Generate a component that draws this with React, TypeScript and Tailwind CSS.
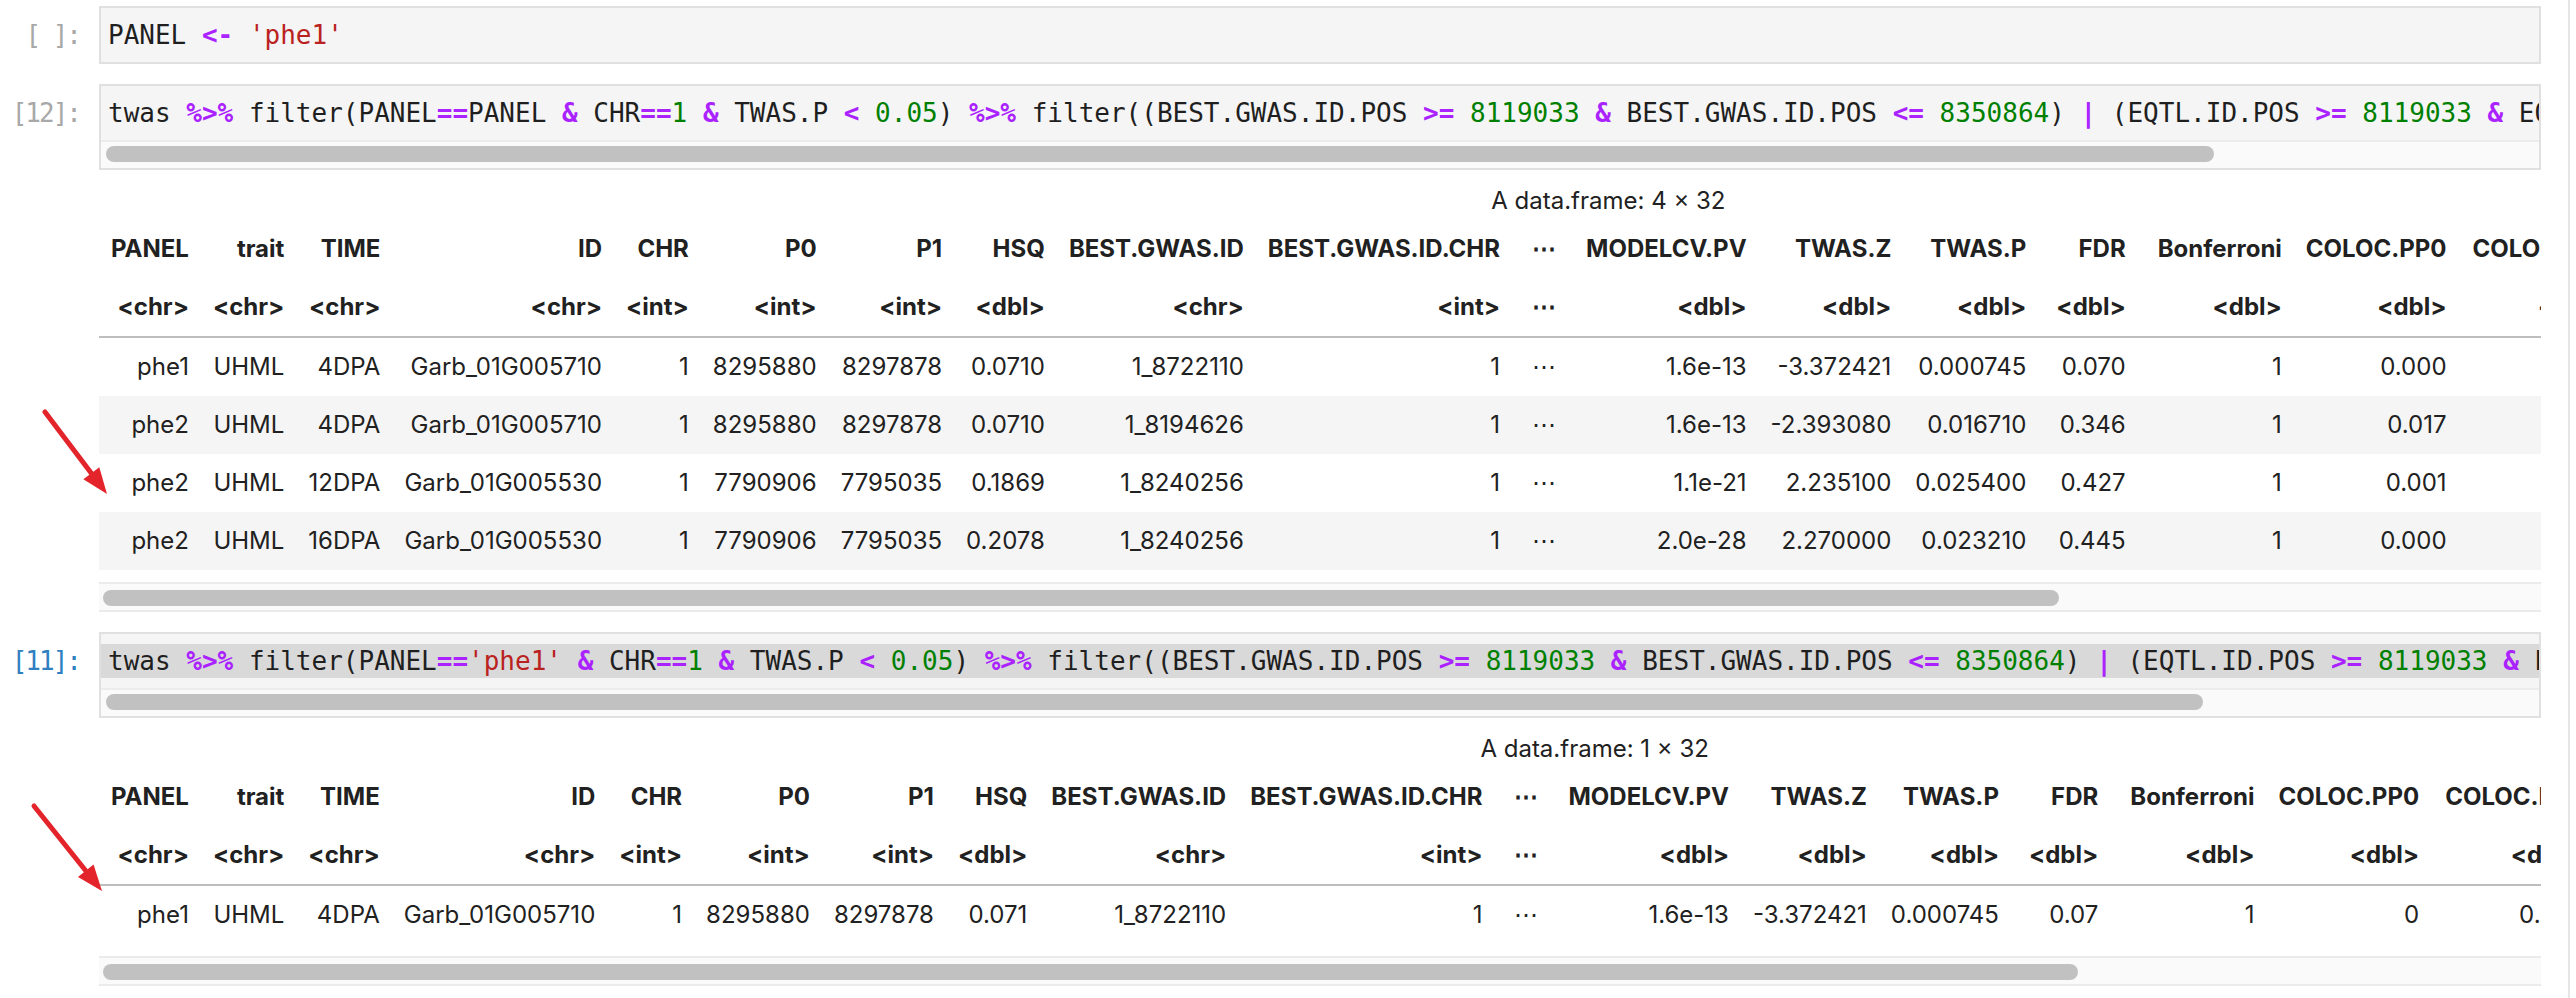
import React from "react";

type Tok = [string, string];

const line1: Tok[] = [["PANEL ", ""], ["<-", "o"], [" ", ""], ["'phe1'", "s"]];

const tail: Tok[] = [
  [" ", ""], ["&", "o"], [" CHR", ""], ["==", "o"], ["1", "n"], [" ", ""], ["&", "o"],
  [" TWAS.P ", ""], ["<", "o"], [" ", ""], ["0.05", "n"], [") ", ""], ["%>%", "o"],
  [" filter((BEST.GWAS.ID.POS ", ""], [">=", "o"], [" ", ""], ["8119033", "n"], [" ", ""],
  ["&", "o"], [" BEST.GWAS.ID.POS ", ""], ["<=", "o"], [" ", ""], ["8350864", "n"], [") ", ""],
  ["|", "o"], [" (EQTL.ID.POS ", ""], [">=", "o"], [" ", ""], ["8119033", "n"], [" ", ""],
  ["&", "o"], [" EQTL.ID.POS ", ""], ["<=", "o"], [" ", ""], ["8350864", "n"], ["))", ""],
];

const line12: Tok[] = [
  ["twas ", ""], ["%>%", "o"], [" filter(PANEL", ""], ["==", "o"], ["PANEL", ""], ...tail,
];
const line11: Tok[] = [
  ["twas ", ""], ["%>%", "o"], [" filter(PANEL", ""], ["==", "o"], ["'phe1'", "s"], ...tail,
];

function Code({ toks }: { toks: Tok[] }) {
  return (
    <>
      {toks.map((t, i) =>
        t[1] === "o" ? (
          <span key={i} className="text-[#aa22ff] font-bold">{t[0]}</span>
        ) : t[1] === "n" ? (
          <span key={i} className="text-[#008000]">{t[0]}</span>
        ) : t[1] === "s" ? (
          <span key={i} className="text-[#ba2121]">{t[0]}</span>
        ) : (
          <span key={i}>{t[0]}</span>
        )
      )}
    </>
  );
}

function Prompt({ label, active }: { label: string; active?: boolean }) {
  return (
    <div
      className={
        "w-[99px] shrink-0 pr-[19px] pt-[12px] text-right text-[26px] leading-[34px] tracking-[-2px] font-['DejaVu_Sans_Mono',monospace] " +
        (active ? "text-[#307fc1]" : "text-[#a8a8a8]")
      }
    >
      {label}
    </div>
  );
}

function CodeCell({
  label,
  toks,
  active,
  scroll,
  selected,
}: {
  label: string;
  toks: Tok[];
  active?: boolean;
  scroll?: string;
  selected?: boolean;
}) {
  return (
    <div className="flex">
      <Prompt label={label} active={active} />
      <div className="flex-1 min-w-0 border-2 border-[#e0e0e0] bg-[#f5f5f5]">
        <div className="h-[54px] py-[10px] overflow-hidden">
          <div
            className={
              "h-[34px] pl-[7px] whitespace-pre text-[26px] leading-[34px] text-[#1f1f1f] font-['DejaVu_Sans_Mono',monospace] " +
              (selected ? "bg-[#d9d9d9]" : "")
            }
          >
            <Code toks={toks} />
          </div>
        </div>
        {scroll ? (
          <div className="h-[28px] border-t-2 border-[#ececec] bg-[#fafafa] pt-[4px] pl-[5px]">
            <div className={"h-[16px] rounded-full bg-[#c1c1c1] " + scroll} />
          </div>
        ) : null}
      </div>
    </div>
  );
}

const headers = [
  "PANEL", "trait", "TIME", "ID", "CHR", "P0", "P1", "HSQ", "BEST.GWAS.ID", "BEST.GWAS.ID.CHR", "⋯",
  "MODELCV.PV", "TWAS.Z", "TWAS.P", "FDR", "Bonferroni", "COLOC.PP0", "COLOC.PP1", "COLOC.PP2", "COLOC.PP3", "COLOC.PP4",
];
const types = [
  "<chr>", "<chr>", "<chr>", "<chr>", "<int>", "<int>", "<int>", "<dbl>", "<chr>", "<int>", "⋯",
  "<dbl>", "<dbl>", "<dbl>", "<dbl>", "<dbl>", "<dbl>", "<dbl>", "<dbl>", "<dbl>", "<dbl>",
];

// left padding per column (tuned to the reference column positions)
const padL = [
  "pl-[12px]", "pl-[12px]", "pl-[12px]", "pl-[12px]", "pl-[12px]", "pl-[12px]", "pl-[12px]", "pl-[12px]",
  "pl-[12px]", "pl-[12px]", "pl-[20px]", "pl-[18px]", "pl-[12px]", "pl-[12px]", "pl-[18px]", "pl-[20px]",
  "pl-[12px]", "pl-[14px]", "pl-[14px]", "pl-[14px]", "pl-[14px]",
];

const rows1: string[][] = [
  ["phe1", "UHML", "4DPA", "Garb_01G005710", "1", "8295880", "8297878", "0.0710", "1_8722110", "1", "⋯", "1.6e-13", "-3.372421", "0.000745", "0.070", "1", "0.000", "0.001", "0.812", "0.002", "0.185"],
  ["phe2", "UHML", "4DPA", "Garb_01G005710", "1", "8295880", "8297878", "0.0710", "1_8194626", "1", "⋯", "1.6e-13", "-2.393080", "0.016710", "0.346", "1", "0.017", "0.004", "0.881", "0.006", "0.092"],
  ["phe2", "UHML", "12DPA", "Garb_01G005530", "1", "7790906", "7795035", "0.1869", "1_8240256", "1", "⋯", "1.1e-21", "2.235100", "0.025400", "0.427", "1", "0.001", "0.000", "0.915", "0.001", "0.083"],
  ["phe2", "UHML", "16DPA", "Garb_01G005530", "1", "7790906", "7795035", "0.2078", "1_8240256", "1", "⋯", "2.0e-28", "2.270000", "0.023210", "0.445", "1", "0.000", "0.000", "0.934", "0.000", "0.066"],
];
const rows2: string[][] = [
  ["phe1", "UHML", "4DPA", "Garb_01G005710", "1", "8295880", "8297878", "0.071", "1_8722110", "1", "⋯", "1.6e-13", "-3.372421", "0.000745", "0.07", "1", "0", "0.001", "0.812", "0.002", "0.185"],
];

function DataFrame({ caption, rows }: { caption: string; rows: string[][] }) {
  return (
    <div className="ml-[99px] w-[2442px] overflow-hidden mt-[16px]">
      <table className="border-separate border-spacing-0 text-[24px] text-[#212121] font-['Inter',sans-serif]">
        <caption className="pb-[5px] leading-[29px] text-center font-normal">{caption}</caption>
        <thead>
          <tr>
            {headers.map((h, i) => (
              <th key={i} className={"h-[58px] pr-[12px] py-0 text-right align-middle font-bold whitespace-nowrap " + padL[i]}>
                {h}
              </th>
            ))}
          </tr>
          <tr>
            {types.map((h, i) => (
              <th
                key={i}
                className={
                  "h-[60px] pr-[12px] py-0 text-right align-middle font-bold whitespace-nowrap border-b-2 border-[#bdbdbd] " +
                  padL[i]
                }
              >
                {h}
              </th>
            ))}
          </tr>
        </thead>
        <tbody>
          {rows.map((r, ri) => (
            <tr key={ri} className={ri % 2 === 1 ? "bg-[#f5f5f5]" : "bg-white"}>
              {r.map((c, ci) => (
                <td key={ci} className={"h-[58px] pr-[12px] py-0 text-right align-middle whitespace-nowrap " + padL[ci]}>
                  {c}
                </td>
              ))}
            </tr>
          ))}
        </tbody>
      </table>
    </div>
  );
}

function TableScroll({ thumb }: { thumb: string }) {
  return (
    <div className="ml-[99px] w-[2442px] mt-[12px] h-[30px] border-y-2 border-[#ebebeb] bg-[#fafafa] pt-[6px] pl-[4px]">
      <div className={"h-[16px] rounded-full bg-[#c1c1c1] " + thumb} />
    </div>
  );
}

function Arrow({ x1, y1, x2, y2 }: { x1: number; y1: number; x2: number; y2: number }) {
  const ang = Math.atan2(y2 - y1, x2 - x1);
  const L = 26;
  const W = 10;
  const bx = x2 - L * Math.cos(ang);
  const by = y2 - L * Math.sin(ang);
  const px = -Math.sin(ang) * W;
  const py = Math.cos(ang) * W;
  return (
    <g>
      <line x1={x1} y1={y1} x2={bx} y2={by} stroke="#e3252b" strokeWidth={5} strokeLinecap="round" />
      <polygon points={`${x2},${y2} ${bx + px},${by + py} ${bx - px},${by - py}`} fill="#e3252b" />
    </g>
  );
}

export default function App() {
  return (
    <div className="relative w-[2576px] h-[998px] overflow-hidden bg-white flex">
      <div className="w-[2568px] shrink-0 pt-[6px] pr-[27px]">
        <CodeCell label="[ ]:" toks={line1} />
        <div className="mt-[20px]">
          <CodeCell label="[12]:" toks={line12} scroll="w-[2108px]" />
        </div>
        <DataFrame caption="A data.frame: 4 × 32" rows={rows1} />
        <TableScroll thumb="w-[1956px]" />
        <div className="mt-[20px]">
          <CodeCell label="[11]:" toks={line11} active selected scroll="w-[2097px]" />
        </div>
        <DataFrame caption="A data.frame: 1 × 32" rows={rows2} />
        <TableScroll thumb="w-[1975px]" />
      </div>
      <div className="flex-1 border-l-2 border-[#e6e6e6] bg-white" />
      <svg className="absolute left-0 top-0 pointer-events-none" width={200} height={998}>
        <Arrow x1={45} y1={412} x2={107} y2={494} />
        <Arrow x1={34} y1={806} x2={102} y2={891} />
      </svg>
    </div>
  );
}
